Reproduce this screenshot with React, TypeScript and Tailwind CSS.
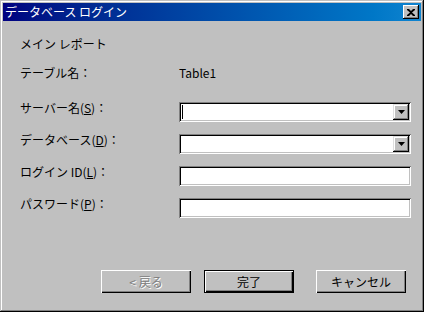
import React from "react";

const font = { fontFamily: '"Noto Sans CJK JP", "Liberation Sans", sans-serif' };

function Field({ combo, caret }: { combo?: boolean; caret?: boolean }) {
  return (
    <div className="relative h-[20px] w-[232px] bg-white shadow-[inset_1px_1px_#808080,inset_-1px_-1px_#fff,inset_2px_2px_#000,inset_-2px_-2px_#c0c0c0]">
      {caret && <div className="absolute left-[3px] top-[3px] h-[14px] w-px bg-black" />}
      {combo && (
        <div className="absolute right-[2px] top-[2px] flex h-[16px] w-[16px] items-center justify-center bg-[#c0c0c0] shadow-[inset_-1px_-1px_#000,inset_1px_1px_#dfdfdf,inset_-2px_-2px_#808080,inset_2px_2px_#fff]">
          <svg width="7" height="4" viewBox="0 0 7 4">
            <path d="M0 0h7L3.5 4z" fill="#000" />
          </svg>
        </div>
      )}
    </div>
  );
}

function Row({ label, children }: { label: React.ReactNode; children: React.ReactNode }) {
  return (
    <div className="flex items-start">
      <div className="-mt-[1px] w-[159px] text-[12px] leading-[14px] text-black">{label}</div>
      {children}
    </div>
  );
}

function Btn({
  children,
  disabled,
  primary,
  className,
}: {
  children: React.ReactNode;
  disabled?: boolean;
  primary?: boolean;
  className?: string;
}) {
  return (
    <div
      className={`flex h-[23px] w-[90px] items-center justify-center bg-[#c0c0c0] text-[12px] ${
        primary
          ? "shadow-[inset_1px_1px_#000,inset_-1px_-1px_#000,inset_2px_2px_#fff,inset_-2px_-2px_#000,inset_-3px_-3px_#808080]"
          : "shadow-[inset_1px_1px_#fff,inset_-1px_-1px_#000,inset_-2px_-2px_#808080]"
      } ${disabled ? "text-[#808080] [text-shadow:1px_1px_#fff]" : "text-black"} ${className ?? ""}`}
    >
      {children}
    </div>
  );
}

export default function App() {
  return (
    <div
      style={font}
      className="flex h-[312px] w-[424px] flex-col bg-[#c0c0c0] p-[3px] shadow-[inset_-1px_-1px_#000,inset_1px_1px_#c0c0c0,inset_-2px_-2px_#808080,inset_2px_2px_#fff]"
    >
      {/* title bar */}
      <div className="flex h-[18px] items-center justify-between bg-linear-to-r from-[#000080] to-[#1084d0] px-[2px]">
        <span className="text-[12px] leading-[14px] text-white">データベース ログイン</span>
        <div className="flex h-[14px] w-[16px] items-center justify-center bg-[#c0c0c0] shadow-[inset_-1px_-1px_#000,inset_1px_1px_#fff,inset_-2px_-2px_#808080]">
          <svg width="8" height="7" viewBox="0 0 8 7">
            <path d="M0 0h2l2 2 2-2h2v1L5 3.5 8 6v1H6L4 5 2 7H0V6l3-2.5L0 1z" fill="#000" />
          </svg>
        </div>
      </div>

      <div className="flex flex-1 flex-col pl-[17px]">
        <div className="mt-[15px] text-[12px] leading-[16px] text-black">メイン レポート</div>
        <div className="mt-[13px] flex text-[12px] leading-[16px] text-black">
          <div className="w-[159px]">テーブル名：</div>
          <div>Table1</div>
        </div>

        <div className="mt-[21px] flex flex-col gap-[12px]">
          <Row label={<>サーバー名(<u>S</u>)：</>}>
            <Field combo caret />
          </Row>
          <Row label={<>データベース(<u>D</u>)：</>}>
            <Field combo />
          </Row>
          <Row label={<>ログイン ID(<u>L</u>)：</>}>
            <Field />
          </Row>
          <Row label={<>パスワード(<u>P</u>)：</>}>
            <Field />
          </Row>
        </div>

        <div className="mt-[52px] flex pl-[81px]">
          <Btn disabled>&lt;&nbsp;戻る</Btn>
          <Btn primary className="ml-[13px]">
            完了
          </Btn>
          <Btn className="ml-[22px]">キャンセル</Btn>
        </div>
      </div>
    </div>
  );
}
